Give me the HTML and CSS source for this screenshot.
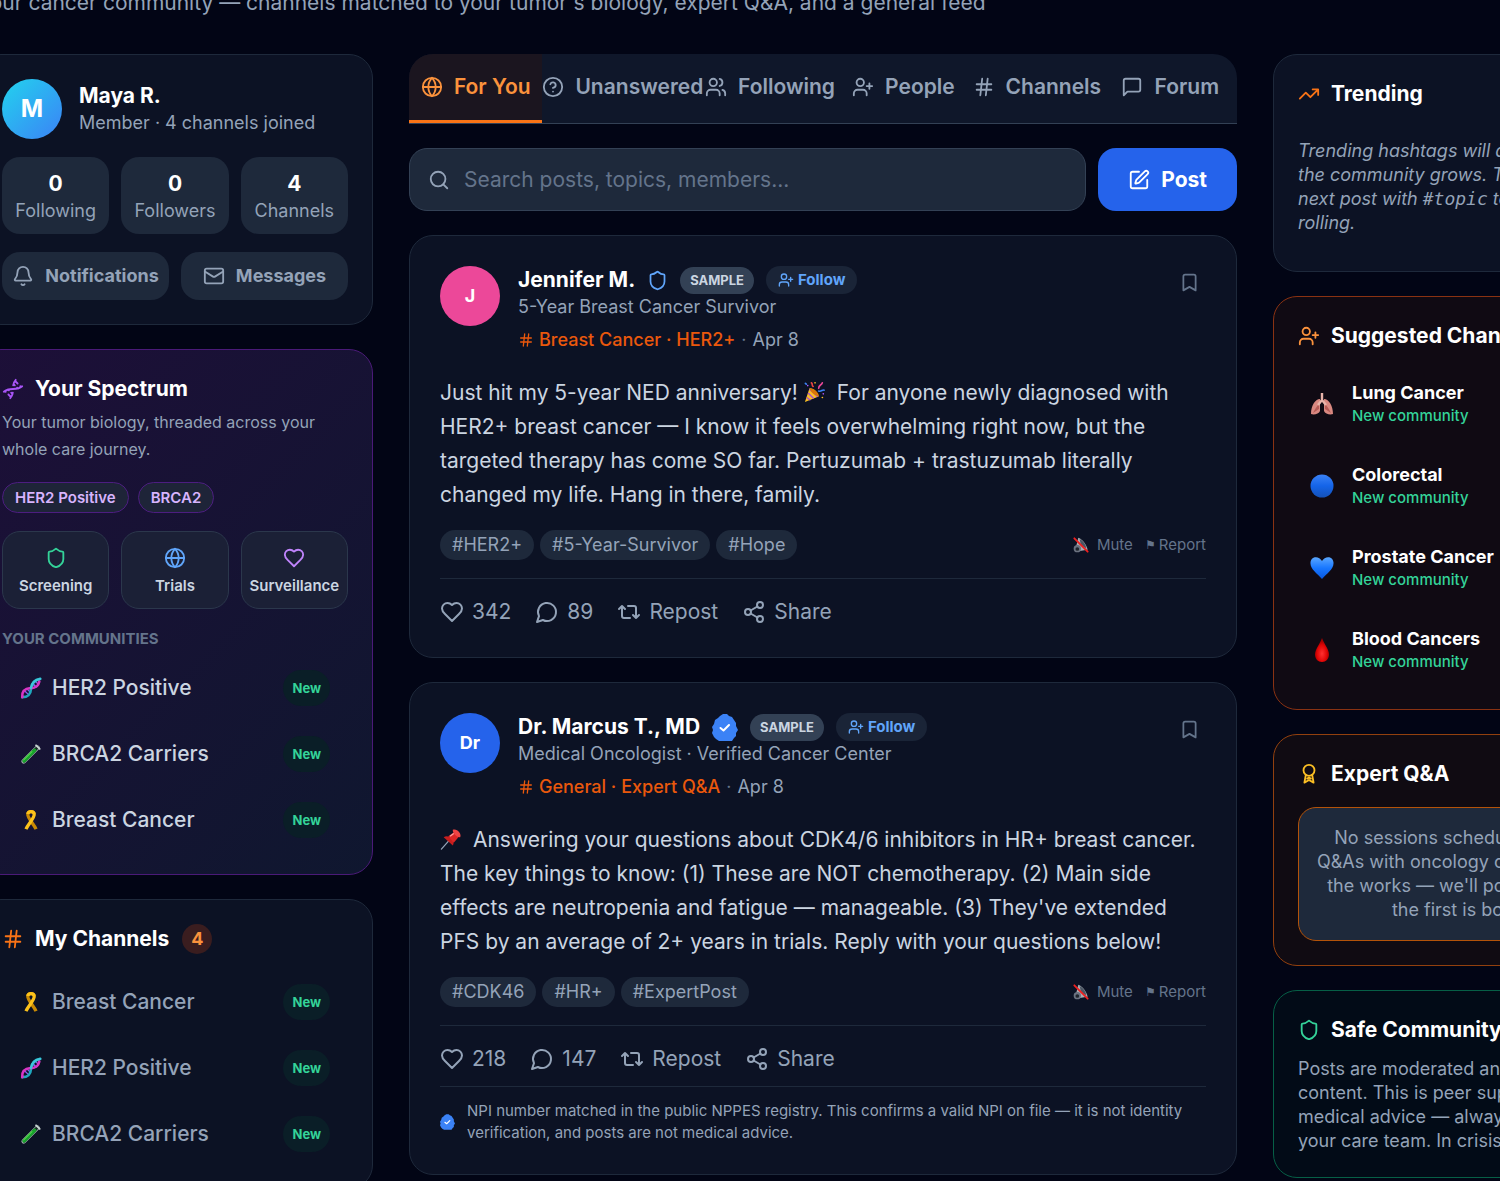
FILE: index.html
```html
<!DOCTYPE html>
<html lang="en">
<head>
<meta charset="utf-8">
<meta name="viewport" content="width=device-width, initial-scale=1">
<title>Community</title>
<link rel="stylesheet" href="styles.css">
</head>
<body>
<svg class="sprite" aria-hidden="true">
  <symbol id="globe" viewBox="0 0 24 24"><circle cx="12" cy="12" r="10"/><path d="M12 2a14.5 14.5 0 0 0 0 20 14.5 14.5 0 0 0 0-20M2 12h20"/></symbol>
  <symbol id="help" viewBox="0 0 24 24"><circle cx="12" cy="12" r="10"/><path d="M9.09 9a3 3 0 0 1 5.83 1c0 2-3 3-3 3M12 17h.01"/></symbol>
  <symbol id="users" viewBox="0 0 24 24"><path d="M16 21v-2a4 4 0 0 0-4-4H6a4 4 0 0 0-4 4v2M22 21v-2a4 4 0 0 0-3-3.87M16 3.13a4 4 0 0 1 0 7.75"/><circle cx="9" cy="7" r="4"/></symbol>
  <symbol id="user-plus" viewBox="0 0 24 24"><path d="M16 21v-2a4 4 0 0 0-4-4H6a4 4 0 0 0-4 4v2M19 8v6M22 11h-6"/><circle cx="9" cy="7" r="4"/></symbol>
  <symbol id="hash" viewBox="0 0 24 24"><path d="M4 9h16M4 15h16M10 3 8 21M16 3l-2 18"/></symbol>
  <symbol id="message" viewBox="0 0 24 24"><path d="M21 15a2 2 0 0 1-2 2H7l-4 4V5a2 2 0 0 1 2-2h14a2 2 0 0 1 2 2z"/></symbol>
  <symbol id="search" viewBox="0 0 24 24"><circle cx="11" cy="11" r="8"/><path d="m21 21-4.3-4.3"/></symbol>
  <symbol id="edit" viewBox="0 0 24 24"><path d="M12 3H5a2 2 0 0 0-2 2v14a2 2 0 0 0 2 2h14a2 2 0 0 0 2-2v-7"/><path d="M18.375 2.625a1 1 0 0 1 3 3l-9.013 9.014a2 2 0 0 1-.853.505l-2.873.84a.5.5 0 0 1-.62-.62l.84-2.873a2 2 0 0 1 .506-.852z"/></symbol>
  <symbol id="bell" viewBox="0 0 24 24"><path d="M10.268 21a2 2 0 0 0 3.464 0M3.262 15.326A1 1 0 0 0 4 17h16a1 1 0 0 0 .74-1.673C19.41 13.956 18 12.499 18 8A6 6 0 0 0 6 8c0 4.499-1.411 5.956-2.738 7.326"/></symbol>
  <symbol id="mail" viewBox="0 0 24 24"><rect x="2" y="4" width="20" height="16" rx="2"/><path d="m22 7-8.97 5.7a1.94 1.94 0 0 1-2.06 0L2 7"/></symbol>
  <symbol id="shield" viewBox="0 0 24 24"><path d="M20 13c0 5-3.5 7.5-7.66 8.95a1 1 0 0 1-.67-.01C7.5 20.5 4 18 4 13V6a1 1 0 0 1 1-1c2 0 4.500-1.200 6.240-2.720a1.170 1.170 0 0 1 1.520 0C14.510 3.810 17 5 19 5a1 1 0 0 1 1 1z"/></symbol>
  <symbol id="heart" viewBox="0 0 24 24"><path d="M19 14c1.490-1.460 3-3.210 3-5.500A5.500 5.500 0 0 0 16.500 3c-1.760 0-3 .5-4.500 2-1.500-1.500-2.740-2-4.500-2A5.500 5.500 0 0 0 2 8.500c0 2.300 1.500 4.050 3 5.500l7 7Z"/></symbol>
  <symbol id="comment" viewBox="0 0 24 24"><path d="M7.900 20A9 9 0 1 0 4 16.100L2 22Z"/></symbol>
  <symbol id="repost" viewBox="0 0 24 24"><path d="m2 9 3-3 3 3M13 18H7a2 2 0 0 1-2-2V6M22 15l-3 3-3-3M11 6h6a2 2 0 0 1 2 2v10"/></symbol>
  <symbol id="share" viewBox="0 0 24 24"><circle cx="18" cy="5" r="3"/><circle cx="6" cy="12" r="3"/><circle cx="18" cy="19" r="3"/><path d="m8.590 13.510 6.830 3.980M15.410 6.510l-6.820 3.980"/></symbol>
  <symbol id="bookmark" viewBox="0 0 24 24"><path d="m19 21-7-4-7 4V5a2 2 0 0 1 2-2h10a2 2 0 0 1 2 2z"/></symbol>
  <symbol id="trend" viewBox="0 0 24 24"><path d="m22 7-8.500 8.500-5-5L2 17M16 7h6v6"/></symbol>
  <symbol id="award" viewBox="0 0 24 24"><circle cx="12" cy="8" r="6"/><path d="m15.480 12.890 1.520 8.530-5-2.900-5 2.900 1.520-8.530M10 17l2-1 2 1"/></symbol>
  <symbol id="helix" viewBox="0 0 24 24"><path d="M2 15c6.670-6 13.330 0 20-6M9 22c1.800-2 2.520-4 2.800-5.990M15 2c-1.800 2-2.520 4-2.800 5.990M17 6l-2.500-2.500M14 8l-1-1M7 18l2.500 2.500M3.500 14.500l.5.500M20 9l.5.500M6.500 12.500l1 1M16.500 10.500l1 1M10 16l1.500 1.500"/></symbol>
  <symbol id="verified" viewBox="0 0 26 27"><path fill="#3b82f6" d="m11 0 4 0 2 2 3 1 2 3 2 3 0 3 2 4-2 3 0 3-2 2-2 3H7l-3-2-2-2-2-4 1-3-1-3 2-3 1-4 3-2 2-2z"/><path fill="none" stroke="#fff" stroke-width="2" stroke-linecap="round" stroke-linejoin="round" d="m8.500 14 3 2.500 5.500-5.500"/></symbol>
  <symbol id="e-dna" viewBox="0 0 24 24"><g fill="none" stroke-linecap="round"><path stroke="#8b5cf6" stroke-width="1.400" d="m5 15 4 4M7.500 13l4 4M14 7l4 4M17 5l3 3M15 9l2 2"/><path stroke="#1fa7bd" stroke-width="3" d="M2.500 22c7 0 9-3 9.500-9s4-10 10-11"/><path stroke="#d835c4" stroke-width="3" d="M2.500 22c-.5-7 2.500-9.500 9-10"/><path stroke="#d835c4" stroke-width="3" d="M12 12c6 0 8-2 9-7"/><path stroke="#3cc7da" stroke-width="2.600" d="M12 12c1-6 4-9 10-10"/></g></symbol>
  <symbol id="e-tube" viewBox="0 0 24 24"><g fill="none" stroke-linecap="round"><path stroke="#9aa7a5" stroke-width="5" d="M4 20 19 5"/><path stroke="#142a22" stroke-width="3.200" d="M4.500 19.500 19 5"/><path stroke="#18a42b" stroke-width="3.800" d="m4.500 19.500 11.500-11.500"/><path stroke="#56d94e" stroke-width="1.200" d="M4 18.500 13 9.500"/><path stroke="#c8d3d2" stroke-width="2" d="m17.500 2.500 4 4"/></g></symbol>
  <symbol id="e-ribbon" viewBox="0 0 24 24"><path fill="none" stroke="#c98a04" stroke-width="3.600" d="M17.500 22C15 16 8 10 8.500 5.500 9 2 15 2 15.500 5.500"/><path fill="none" stroke="#fcc21b" stroke-width="3.600" d="M6.500 22C9 16 16 10 15.500 5.500 15 2 9 2 8.500 5.500"/></symbol>
  <symbol id="e-party" viewBox="0 0 24 24"><path fill="#fbbf24" d="M6 8 1 23l15-6C15 12 11 8 6 8z"/><path fill="none" stroke="#a855c7" stroke-width="1.600" d="m4.500 13 6 6M3 18l4 3M6 9l9 8"/><path fill="#d97706" d="M6 8c4-1 11 5 10 9-4-1-9-5-10-9z"/><g fill="none" stroke-linecap="round" stroke-width="1.800"><path stroke="#ef4444" d="M8 2c2 1 0 3 2 4"/><path stroke="#ec4899" d="M20 2c-1 3-4 2-4 6"/><path stroke="#3b82f6" d="M22 10c-2-1-3 2-6 1M1.500 2.500l1 1"/><path stroke="#fbbf24" d="M20 18h.1M12 2h.1"/><path stroke="#a855f7" d="M4 5h.1M21 14h.1"/></g></symbol>
  <symbol id="e-pin" viewBox="0 0 24 24"><path stroke="#94a3b8" stroke-width="1.400" stroke-linecap="round" d="m1.500 23 8-9"/><path fill="#c81e1e" d="M4 10c3-2 6-1 8 1s4 5 2 8z"/><path fill="#dc2626" d="m9 9 7-5 5 5-6 7z"/><path fill="#ef4444" d="M14 2c4-2 10 4 8 8-3 1-9-5-8-8z"/><path stroke="#fca5a5" stroke-width="1.200" d="m11 9 4-3"/></symbol>
  <symbol id="e-mute" viewBox="0 0 24 24"><path fill="#a8adb3" d="M5 13 8 1c7 3 12 10 14 18l-12 2z"/><path fill="#4b5563" d="M10 3c6 3 9 8 10 14L12 13z"/><circle cx="6.500" cy="17.500" r="5.500" fill="#6b7280"/><circle cx="6.500" cy="18" r="2.800" fill="#20252d"/><path stroke="#ef2020" stroke-width="2.800" stroke-linecap="round" d="m2 2 20 20"/></symbol>
  <symbol id="e-lungs" viewBox="0 0 24 24"><path fill="#d98880" d="M10 7c-5 0-9 7-9 15 3 1 8 0 9-3zM14 7c5 0 9 7 9 15-3 1-8 0-9-3z"/><path fill="#b65a55" d="M9 12c-2 2-4 5-6 9l6-4zM15 12c2 2 4 5 6 9l-6-4z"/><path fill="none" stroke="#e8b4aa" stroke-width="2.400" d="M12 1v8M12 8l-4 5M12 8l4 5"/></symbol>
  <symbol id="e-circle" viewBox="0 0 24 24"><circle cx="12" cy="12" r="11.500" fill="url(#blue)"/></symbol>
  <symbol id="e-heart" viewBox="0 0 24 24"><path fill="url(#sky)" d="M12 23C7 17 0 13 .5 6.500 1 0 9-.5 12 5c3-5.500 11-5 11.500 1.500C24 13 17 17 12 23z"/></symbol>
  <symbol id="e-drop" viewBox="0 0 24 24"><path fill="url(#red)" d="M12 0c2 6 7 11 7 16.500C19 21 16 24 12 24s-7-3-7-7.500C5 11 10 6 12 0z"/></symbol>
  <defs>
    <linearGradient id="blue" x2="0" y2="1"><stop stop-color="#3b82f6"/><stop offset=".5" stop-color="#1464e8"/><stop offset="1" stop-color="#1552b8"/></linearGradient>
    <linearGradient id="sky" x2="0" y2="1"><stop stop-color="#5aa7ff"/><stop offset=".5" stop-color="#1877ff"/><stop offset="1" stop-color="#0757e0"/></linearGradient>
    <radialGradient id="red" cy=".65"><stop stop-color="#ff3030"/><stop offset=".7" stop-color="#e00505"/><stop offset="1" stop-color="#a80000"/></radialGradient>
  </defs>
</svg>

<div class="page">
  <p class="intro">Your cancer community — channels matched to your tumor's biology, expert Q&amp;A, and a general feed</p>
  <div class="columns">

    <aside class="column">
      <section class="card">
        <div class="profile">
          <span class="avatar avatar-me">M</span>
          <div>
            <h2 class="name">Maya R.</h2>
            <p class="small">Member · 4 channels joined</p>
          </div>
        </div>
        <div class="thirds">
          <div class="stat"><strong>0</strong><span>Following</span></div>
          <div class="stat"><strong>0</strong><span>Followers</span></div>
          <div class="stat"><strong>4</strong><span>Channels</span></div>
        </div>
        <div class="halves">
          <button class="soft" type="button"><svg class="icon"><use href="#bell"/></svg>Notifications</button>
          <button class="soft" type="button"><svg class="icon"><use href="#mail"/></svg>Messages</button>
        </div>
      </section>

      <section class="card card-spectrum">
        <h2 class="title"><svg class="icon purple"><use href="#helix"/></svg>Your Spectrum</h2>
        <p class="lead">Your tumor biology, threaded across your whole care journey.</p>
        <div class="markers"><span class="marker">HER2 Positive</span><span class="marker">BRCA2</span></div>
        <div class="thirds">
          <button class="tile" type="button"><svg class="icon green"><use href="#shield"/></svg>Screening</button>
          <button class="tile" type="button"><svg class="icon blue"><use href="#globe"/></svg>Trials</button>
          <button class="tile" type="button"><svg class="icon violet"><use href="#heart"/></svg>Surveillance</button>
        </div>
        <h3 class="label">Your communities</h3>
        <div class="rows">
          <a class="row bright" href="#"><svg class="emoji"><use href="#e-dna"/></svg><span>HER2 Positive</span><em class="new">New</em></a>
          <a class="row bright" href="#"><svg class="emoji"><use href="#e-tube"/></svg><span>BRCA2 Carriers</span><em class="new">New</em></a>
          <a class="row bright" href="#"><svg class="emoji"><use href="#e-ribbon"/></svg><span>Breast Cancer</span><em class="new">New</em></a>
        </div>
      </section>

      <section class="card">
        <h2 class="title title-list"><svg class="icon orange"><use href="#hash"/></svg>My Channels<span class="count">4</span></h2>
        <div class="rows">
          <a class="row" href="#"><svg class="emoji"><use href="#e-ribbon"/></svg><span>Breast Cancer</span><em class="new">New</em></a>
          <a class="row" href="#"><svg class="emoji"><use href="#e-dna"/></svg><span>HER2 Positive</span><em class="new">New</em></a>
          <a class="row" href="#"><svg class="emoji"><use href="#e-tube"/></svg><span>BRCA2 Carriers</span><em class="new">New</em></a>
        </div>
      </section>
    </aside>

    <main class="column">
      <nav class="tabs">
        <button class="tab active" type="button"><svg class="icon"><use href="#globe"/></svg>For You</button>
        <button class="tab" type="button"><svg class="icon"><use href="#help"/></svg>Unanswered</button>
        <button class="tab" type="button"><svg class="icon"><use href="#users"/></svg>Following</button>
        <button class="tab" type="button"><svg class="icon"><use href="#user-plus"/></svg>People</button>
        <button class="tab" type="button"><svg class="icon"><use href="#hash"/></svg>Channels</button>
        <button class="tab" type="button"><svg class="icon"><use href="#message"/></svg>Forum</button>
      </nav>

      <form class="searchbar">
        <label class="search"><svg class="icon"><use href="#search"/></svg><input type="search" aria-label="Search posts" placeholder="Search posts, topics, members..."></label>
        <button class="post-button" type="button"><svg class="icon"><use href="#edit"/></svg>Post</button>
      </form>

      <article class="card post">
        <header class="post-head">
          <span class="avatar avatar-pink">J</span>
          <div class="who">
            <div class="who-line"><h2 class="name">Jennifer M.</h2><svg class="icon-m blue"><use href="#shield"/></svg><span class="sample">SAMPLE</span><button class="follow" type="button"><svg class="icon-s"><use href="#user-plus"/></svg>Follow</button></div>
            <p class="small role">5-Year Breast Cancer Survivor</p>
            <p class="meta"><svg class="icon-s"><use href="#hash"/></svg><a href="#">Breast Cancer · HER2+</a><i>·</i><time>Apr 8</time></p>
          </div>
          <button class="save" type="button" aria-label="Save"><svg class="icon-m"><use href="#bookmark"/></svg></button>
        </header>
        <p class="body">Just hit my 5-year NED anniversary! <svg class="inline-emoji"><use href="#e-party"/></svg> For anyone newly diagnosed with HER2+ breast cancer — I know it feels overwhelming right now, but the targeted therapy has come SO far. Pertuzumab + trastuzumab literally changed my life. Hang in there, family.</p>
        <div class="tags">
          <a class="tag" href="#">#HER2+</a><a class="tag" href="#">#5-Year-Survivor</a><a class="tag" href="#">#Hope</a>
          <div class="moderate"><button type="button"><svg class="mute"><use href="#e-mute"/></svg>Mute</button><button type="button"><span class="flag">⚑</span>Report</button></div>
        </div>
        <div class="actions">
          <button type="button"><svg class="icon-l"><use href="#heart"/></svg>342</button>
          <button type="button"><svg class="icon-l"><use href="#comment"/></svg>89</button>
          <button type="button"><svg class="icon-l"><use href="#repost"/></svg>Repost</button>
          <button type="button"><svg class="icon-l"><use href="#share"/></svg>Share</button>
        </div>
      </article>

      <article class="card post">
        <header class="post-head">
          <span class="avatar avatar-blue">Dr</span>
          <div class="who">
            <div class="who-line"><h2 class="name">Dr. Marcus T., MD</h2><svg class="verified"><use href="#verified"/></svg><span class="sample">SAMPLE</span><button class="follow" type="button"><svg class="icon-s"><use href="#user-plus"/></svg>Follow</button></div>
            <p class="small role">Medical Oncologist · Verified Cancer Center</p>
            <p class="meta"><svg class="icon-s"><use href="#hash"/></svg><a href="#">General · Expert Q&amp;A</a><i>·</i><time>Apr 8</time></p>
          </div>
          <button class="save" type="button" aria-label="Save"><svg class="icon-m"><use href="#bookmark"/></svg></button>
        </header>
        <p class="body"><svg class="inline-emoji"><use href="#e-pin"/></svg> Answering your questions about CDK4/6 inhibitors in HR+ breast cancer. The key things to know: (1) These are NOT chemotherapy. (2) Main side effects are neutropenia and fatigue — manageable. (3) They've extended PFS by an average of 2+ years in trials. Reply with your questions below!</p>
        <div class="tags">
          <a class="tag" href="#">#CDK46</a><a class="tag" href="#">#HR+</a><a class="tag" href="#">#ExpertPost</a>
          <div class="moderate"><button type="button"><svg class="mute"><use href="#e-mute"/></svg>Mute</button><button type="button"><span class="flag">⚑</span>Report</button></div>
        </div>
        <div class="actions">
          <button type="button"><svg class="icon-l"><use href="#heart"/></svg>218</button>
          <button type="button"><svg class="icon-l"><use href="#comment"/></svg>147</button>
          <button type="button"><svg class="icon-l"><use href="#repost"/></svg>Repost</button>
          <button type="button"><svg class="icon-l"><use href="#share"/></svg>Share</button>
        </div>
        <div class="notice"><svg class="verified-s"><use href="#verified"/></svg><p>NPI number matched in the public NPPES registry. This confirms a valid NPI on file — it is not identity verification, and posts are not medical advice.</p></div>
      </article>
    </main>

    <aside class="column">
      <section class="card">
        <h2 class="title title-list"><svg class="icon orange"><use href="#trend"/></svg>Trending</h2>
        <p class="trending">Trending hashtags will appear as<br>the community grows. Tag your<br>next post with <code>#topic</code> to get it<br>rolling.</p>
      </section>

      <section class="card card-suggested">
        <h2 class="title title-list"><svg class="icon amber"><use href="#user-plus"/></svg>Suggested Channels</h2>
        <div class="suggestions">
          <a class="suggestion" href="#"><svg class="emoji-l"><use href="#e-lungs"/></svg><span><strong>Lung Cancer</strong><small>New community</small></span></a>
          <a class="suggestion" href="#"><svg class="emoji-l"><use href="#e-circle"/></svg><span><strong>Colorectal</strong><small>New community</small></span></a>
          <a class="suggestion" href="#"><svg class="emoji-l"><use href="#e-heart"/></svg><span><strong>Prostate Cancer</strong><small>New community</small></span></a>
          <a class="suggestion" href="#"><svg class="emoji-l"><use href="#e-drop"/></svg><span><strong>Blood Cancers</strong><small>New community</small></span></a>
        </div>
      </section>

      <section class="card card-expert">
        <h2 class="title title-list"><svg class="icon yellow"><use href="#award"/></svg>Expert Q&amp;A</h2>
        <p class="empty">No sessions scheduled yet. Live<br>Q&amp;As with oncology clinicians are in<br>the works — we'll post here when<br>the first is booked.</p>
      </section>

      <section class="card card-safe">
        <h2 class="title"><svg class="icon green"><use href="#shield"/></svg>Safe Community</h2>
        <p class="safe">Posts are moderated and free of spam<br>content. This is peer support, not<br>medical advice — always talk with<br>your care team. In crisis, call 988.</p>
      </section>
    </aside>
  </div>
</div>
</body>
</html>
```
FILE: styles.css
```css
* { box-sizing: border-box; }
body {
  margin: 0;
  background: #020515;
  color: #94a3b8;
  font: 21px/30px Inter, "Liberation Sans", sans-serif;
  overflow: hidden;
}
h2, h3, p { margin: 0; font-size: inherit; font-weight: inherit; }
button { margin: 0; padding: 0; border: 0; background: none; color: inherit; font: inherit; cursor: pointer; }
a { color: inherit; text-decoration: none; }
svg { flex: none; overflow: visible; }
.sprite { position: absolute; width: 0; height: 0; }

.icon, .icon-l, .icon-m, .icon-s {
  width: 22px; height: 22px;
  fill: none; stroke: currentColor; stroke-width: 2;
  stroke-linecap: round; stroke-linejoin: round;
}
.icon-l { width: 24px; height: 24px; }
.icon-m { width: 21px; height: 21px; }
.icon-s { width: 16px; height: 16px; }
.emoji { width: 22px; height: 22px; }
.purple { color: #a855f7; }
.violet { color: #c084fc; }
.green { color: #34d399; }
.blue { color: #60a5fa; }
.orange { color: #f97316; }
.amber { color: #fb923c; }
.yellow { color: #fbbf24; }

/* The page canvas runs past both window edges. */
.page { margin: -12px -169px 0 -23px; }
.intro { margin-bottom: 36px; }
.columns {
  display: grid;
  grid-template-columns: 396px minmax(0, 1fr) 396px;
  gap: 36px;
  align-items: start;
}
.column { display: flex; flex-direction: column; gap: 24px; min-width: 0; }

.card {
  padding: 24px;
  border: 1px solid #1e293b;
  border-radius: 24px;
  background: #0c1224;
}
.card-spectrum { border-color: #4a1a78; background: linear-gradient(135deg, #1d0f38, #0f172f); }
.card-suggested { border-color: #8a3212; background: #100a13; }
.card-expert { border-color: #92400e; background: #100b12; }
.card-safe { border-color: #065f46; background: #020b17; }

.name { color: #fff; font-weight: 700; line-height: 28px; white-space: nowrap; }
.small { font-size: 18px; line-height: 26px; }
.title { display: flex; align-items: center; gap: 11px; color: #fff; font-weight: 700; white-space: nowrap; }
.title-list { margin-bottom: 18px; }

.avatar {
  display: flex; flex: none; align-items: center; justify-content: center;
  width: 60px; height: 60px; border-radius: 50%;
  color: #fff; font-size: 18px; font-weight: 700;
}
.avatar-me { background: linear-gradient(135deg, #22d3ee, #3b82f6); font-size: 24px; }
.avatar-pink { background: #ec4899; }
.avatar-blue { background: #2563eb; }

.profile { display: flex; align-items: center; gap: 17px; margin-bottom: 18px; }
.thirds { display: grid; grid-template-columns: repeat(3, 1fr); gap: 12px; }
.halves { display: grid; grid-template-columns: 1fr 1fr; gap: 12px; margin-top: 18px; }
.stat {
  display: flex; flex-direction: column; align-items: center;
  padding: 12px 0 11px; border-radius: 18px; background: #1e293b;
  font-size: 18px; line-height: 24px;
}
.stat strong { color: #fff; font-size: 21px; line-height: 30px; }
.soft {
  display: flex; align-items: center; justify-content: center; gap: 11px;
  height: 48px; border-radius: 18px; background: #1e293b;
  font-size: 18px; font-weight: 700;
}

.lead { margin: 5px 0 19px; font-size: 16px; line-height: 27px; }
.markers { display: flex; gap: 9px; margin-bottom: 18px; }
.marker {
  padding: 0 12px; border: 1px solid #4c1d80; border-radius: 16px;
  background: #1e2438; color: #d8b4fe;
  font-size: 15px; font-weight: 600; line-height: 29px;
}
.tile {
  display: flex; flex-direction: column; align-items: center; gap: 6px;
  padding: 15px 0 11px; border: 1px solid #2b374c; border-radius: 18px;
  background: #1b2036; color: #cbd5e1;
  font-size: 15px; font-weight: 600; line-height: 22px;
}
.label { margin: 19px 0 8px; color: #64748b; font-size: 15px; font-weight: 700; line-height: 22px; text-transform: uppercase; }
.rows { display: flex; flex-direction: column; gap: 6px; }
.row { display: flex; align-items: center; gap: 10px; padding: 12px 18px; font-weight: 500; }
.bright { color: #cbd5e1; }
.new {
  margin-left: auto; padding: 0 9px; border-radius: 18px;
  background: #0a1e27; color: #34d399;
  font-size: 13px; font-style: normal; font-weight: 700; line-height: 36px;
}
.count {
  width: 30px; margin-left: 2px; border-radius: 50%;
  background: #3a1d1f; color: #fb923c;
  font-size: 18px; text-align: center;
}

.tabs {
  display: flex; overflow: hidden;
  border-bottom: 1px solid #334155; border-radius: 24px 24px 0 0;
  background: #0f172a;
}
.tab {
  display: flex; flex: 1; align-items: center; justify-content: center; gap: 11px;
  padding: 18px 0; border-bottom: 3px solid transparent;
  font-weight: 600; white-space: nowrap;
}
.active { border-color: #f97316; background: #1b151f; color: #fb923c; }

.searchbar { display: flex; gap: 12px; }
.search {
  display: flex; flex: 1; align-items: center; gap: 14px;
  height: 63px; padding: 0 18px;
  border: 1px solid #334155; border-radius: 18px; background: #1e293b;
}
.search input { flex: 1; min-width: 0; padding: 0; border: 0; outline: 0; background: none; color: #fff; font: inherit; }
.search input::placeholder { color: #64748b; opacity: 1; }
.post-button {
  display: flex; align-items: center; gap: 11px;
  padding: 0 30px; border-radius: 18px;
  background: #2563eb; color: #fff; font-weight: 700;
}

.post { padding: 30px; }
.post-head { display: flex; align-items: flex-start; gap: 18px; margin-bottom: 23px; }
.who { flex: 1; min-width: 0; }
.who-line { display: flex; align-items: center; gap: 12px; height: 28px; }
.role { margin-bottom: 6px; }
.sample {
  padding: 0 10px; border-radius: 14px; background: #334155; color: #cbd5e1;
  font-size: 13px; font-weight: 700; line-height: 27px;
}
.follow {
  display: flex; align-items: center; gap: 4px;
  padding: 0 12px; border-radius: 14px; background: #1a2437; color: #60a5fa;
  font-size: 15px; font-weight: 700; line-height: 28px;
}
.verified { width: 26px; height: 27px; }
.verified-s { width: 15px; height: 16px; }
.meta { display: flex; align-items: center; gap: 5px; font-size: 18px; line-height: 27px; }
.meta a, .meta svg { color: #ea580c; }
.meta a { font-weight: 500; }
.meta i { padding: 0 1px; color: #64748b; font-style: normal; }
.save { padding: 6px; color: #64748b; line-height: 0; }
.body { color: #cbd5e1; line-height: 34px; }
.inline-emoji { width: 22px; height: 22px; margin-right: 5px; vertical-align: -3px; }

.tags { display: flex; align-items: center; gap: 6px; margin: 18px 0; }
.tag { padding: 0 12px; border-radius: 15px; background: #1e293b; font-size: 18px; }
.moderate { display: flex; gap: 12px; margin-left: auto; color: #64748b; font-size: 15px; }
.moderate button { display: flex; align-items: center; }
.mute { width: 16px; height: 16px; margin-right: 8px; }
.flag { margin-right: 3px; font-size: 12px; }
.actions { display: flex; gap: 24px; padding-top: 18px; border-top: 1px solid #1e293b; }
.actions button { display: flex; align-items: center; gap: 8px; }
.notice {
  display: flex; align-items: center; gap: 12px;
  margin-top: 12px; padding-top: 13px; border-top: 1px solid #1e293b;
  font-size: 15px; line-height: 22px;
}

.trending { padding: 12px 0; font-size: 18px; font-style: italic; line-height: 24px; white-space: nowrap; }
.trending code { font: 18px/18px "DejaVu Sans Mono", monospace; font-style: italic; }
.suggestions { display: flex; flex-direction: column; gap: 12px; }
.suggestion { display: flex; align-items: center; gap: 18px; padding: 12px; }
.emoji-l { width: 24px; height: 24px; }
.suggestion strong { display: block; color: #fff; font-size: 18px; font-weight: 700; line-height: 24px; }
.suggestion small { display: block; color: #34d399; font-size: 15px; font-weight: 500; line-height: 22px; }
.empty {
  padding: 18px; border: 1px solid #b45309; border-radius: 18px; background: #1e293b;
  font-size: 18px; line-height: 24px; text-align: center; white-space: nowrap;
}
.safe { margin-top: 12px; font-size: 18px; line-height: 24px; white-space: nowrap; }
```
